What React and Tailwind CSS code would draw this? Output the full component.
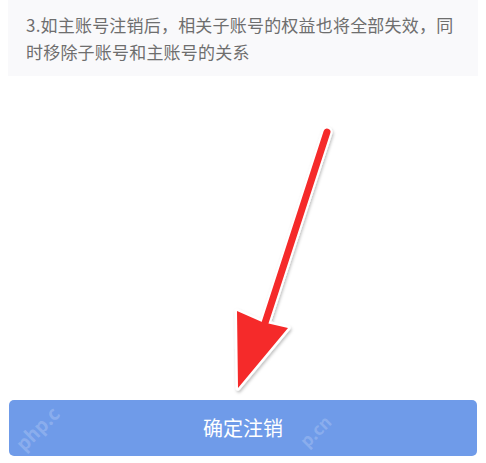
import React from 'react';

const font = { fontFamily: '"Noto Sans CJK SC", "Noto Sans", sans-serif' };

function Arrow() {
  return (
    <svg className="absolute left-0 top-0 pointer-events-none" width="486" height="463" viewBox="0 0 486 463">
      <defs>
        <filter id="sh" x="-20%" y="-20%" width="140%" height="140%">
          <feDropShadow dx="1" dy="2" stdDeviation="1.5" floodColor="#000" floodOpacity="0.25" />
        </filter>
      </defs>
      <g filter="url(#sh)">
        <line x1="327" y1="132" x2="264" y2="326" stroke="#fff" strokeWidth="11" strokeLinecap="round" />
        <polygon points="237,311 262,322 288,328 238,388" fill="#fff" stroke="#fff" strokeWidth="5" strokeLinejoin="round" />
        <line x1="327" y1="132" x2="264" y2="326" stroke="#f52a2a" strokeWidth="7" strokeLinecap="round" />
        <polygon points="237,311 262,322 288,328 238,388" fill="#f52a2a" />
      </g>
    </svg>
  );
}

export default function App() {
  return (
    <div className="relative w-[486px] h-[463px] bg-white overflow-hidden" style={font}>
      <div className="mx-[8px] bg-[#f9f9fb] pl-[18px] pr-[10px] pt-[11px] pb-[11px]">
        <p className="text-[17px] leading-[27px] text-[#6e6e6e] tracking-[0.2px]">
          3.如主账号注销后，相关子账号的权益也将全部失效，同时移除子账号和主账号的关系
        </p>
      </div>

      <div className="h-[324px]" />

      <button className="relative mx-[9px] w-[468px] h-[56px] rounded-[5px] bg-[#6f9be9] text-white text-[20px] overflow-hidden">
        确定注销
        <span className="absolute left-[2px] top-[14px] -rotate-45 text-[19px] font-bold text-white/20">php.c</span>
        <span className="absolute left-[288px] top-[18px] -rotate-45 text-[17px] font-bold text-white/20">p.cn</span>
      </button>

      <Arrow />
    </div>
  );
}
